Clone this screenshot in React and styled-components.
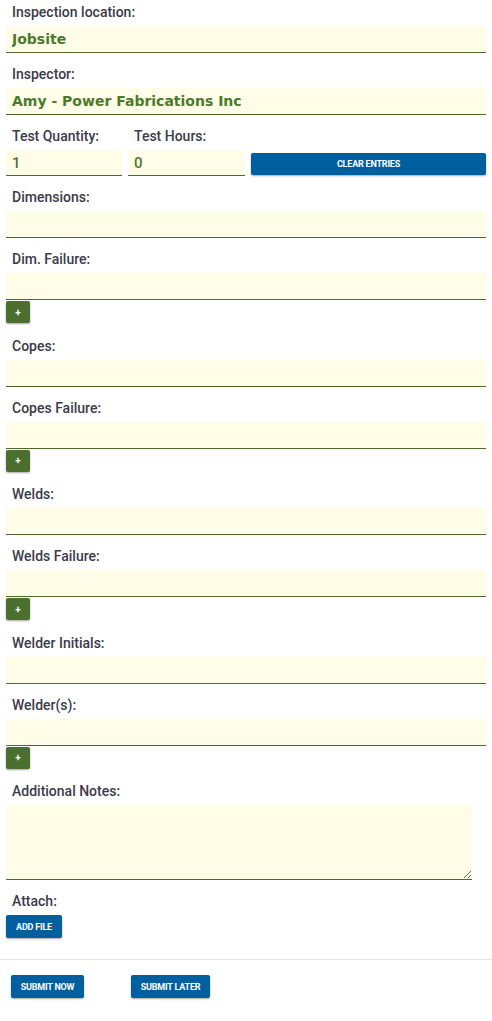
import React from 'react';
import styled, { createGlobalStyle } from 'styled-components';

const GlobalStyle = createGlobalStyle`
  body {
    margin: 0;
    background: #fff;
    font-family: Roboto, "Liberation Sans", sans-serif;
  }
`;

const Page = styled.div`
  display: flex;
  flex-direction: column;
  width: 492px;
`;

const Form = styled.div`
  display: flex;
  flex-direction: column;
  padding: 4px 6px 0;
`;

const Field = styled.div`
  display: flex;
  flex-direction: column;
  margin-bottom: ${(p) => (p.$tight ? '14.5px' : '13px')};
`;

const Label = styled.label`
  font-size: 14px;
  line-height: 17px;
  font-weight: 500;
  color: #3b3b4a;
  padding-left: 6px;
  margin-bottom: 5px;
`;

const TextInput = styled.input`
  box-sizing: border-box;
  height: ${(p) => p.$h || 27}px;
  width: 100%;
  border: none;
  border-bottom: 1px solid #4a6a2c;
  background: #fffde8;
  padding: 0 6px;
  outline: none;
  color: #4b7a2c;
  font-family: ${(p) => (p.$verdana ? '"DejaVu Sans", Verdana, sans-serif' : 'Roboto, sans-serif')};
  font-weight: ${(p) => (p.$verdana ? 700 : 500)};
  font-size: ${(p) => (p.$verdana ? '14px' : '15px')};
`;

const NotesArea = styled.textarea`
  box-sizing: border-box;
  width: 466px;
  height: 75px;
  border: none;
  border-bottom: 1px solid #4a6a2c;
  background: #fffde8;
  outline: none;
  padding: 6px;
  font-family: Roboto, sans-serif;
`;

const TestRow = styled.div`
  display: grid;
  grid-template-columns: 116px 117px 1fr;
  column-gap: 6px;
  align-items: center;
  margin-bottom: 13px;
`;

const Cell = styled.div`
  display: flex;
  flex-direction: column;
`;

const PlusButton = styled.button`
  width: 24px;
  height: 22px;
  margin-top: 1px;
  padding: 0;
  border: none;
  border-radius: 2px;
  background: #4b6f2e;
  color: #fff;
  font-family: Roboto, sans-serif;
  font-weight: 700;
  font-size: 10px;
  box-shadow: 0 1px 2px rgba(0, 0, 0, 0.35);
`;

const BlueButton = styled.button`
  height: ${(p) => p.$h || 23}px;
  width: ${(p) => (p.$w ? `${p.$w}px` : 'auto')};
  padding: 0 8px;
  border: none;
  border-radius: 2px;
  background: #005f9f;
  color: #fff;
  font-family: Roboto, sans-serif;
  font-weight: 700;
  font-size: 9px;
  letter-spacing: -0.2px;
  text-transform: uppercase;
  box-shadow: 0 1px 2px rgba(0, 0, 0, 0.35);
`;

const ClearCell = styled.div`
  display: flex;
  flex-direction: column;
  justify-content: flex-end;
  height: 100%;
  padding-bottom: 2px;
`;

const Footer = styled.div`
  display: flex;
  gap: 47px;
  border-top: 1px solid #e2e2e2;
  margin-top: 21px;
  padding: 15px 11px 20px;
`;

const Attach = styled.div`
  display: flex;
  flex-direction: column;
  align-items: flex-start;
`;

const simple = (label, value, verdana) => (
  <Field key={label}>
    <Label>{label}</Label>
    <TextInput defaultValue={value} $verdana={verdana} />
  </Field>
);

const withPlus = (label) => (
  <Field key={label} $tight>
    <Label>{label}</Label>
    <TextInput />
    <PlusButton>+</PlusButton>
  </Field>
);

export default function App() {
  return (
    <Page>
      <GlobalStyle />
      <Form>
        {simple('Inspection location:', 'Jobsite', true)}
        {simple('Inspector:', 'Amy - Power Fabrications Inc', true)}
        <TestRow>
          <Cell>
            <Label>Test Quantity:</Label>
            <TextInput $h={26} defaultValue="1" />
          </Cell>
          <Cell>
            <Label>Test Hours:</Label>
            <TextInput $h={26} defaultValue="0" />
          </Cell>
          <ClearCell>
            <BlueButton $h={22}>Clear Entries</BlueButton>
          </ClearCell>
        </TestRow>
        {simple('Dimensions:')}
        {withPlus('Dim. Failure:')}
        {simple('Copes:')}
        {withPlus('Copes Failure:')}
        {simple('Welds:')}
        {withPlus('Welds Failure:')}
        {simple('Welder Initials:')}
        {withPlus('Welder(s):')}
        <Field>
          <Label>Additional Notes:</Label>
          <NotesArea />
        </Field>
        <Attach>
          <Label>Attach:</Label>
          <BlueButton $w={56}>Add File</BlueButton>
        </Attach>
      </Form>
      <Footer>
        <BlueButton $w={73}>Submit Now</BlueButton>
        <BlueButton $w={79}>Submit Later</BlueButton>
      </Footer>
    </Page>
  );
}
